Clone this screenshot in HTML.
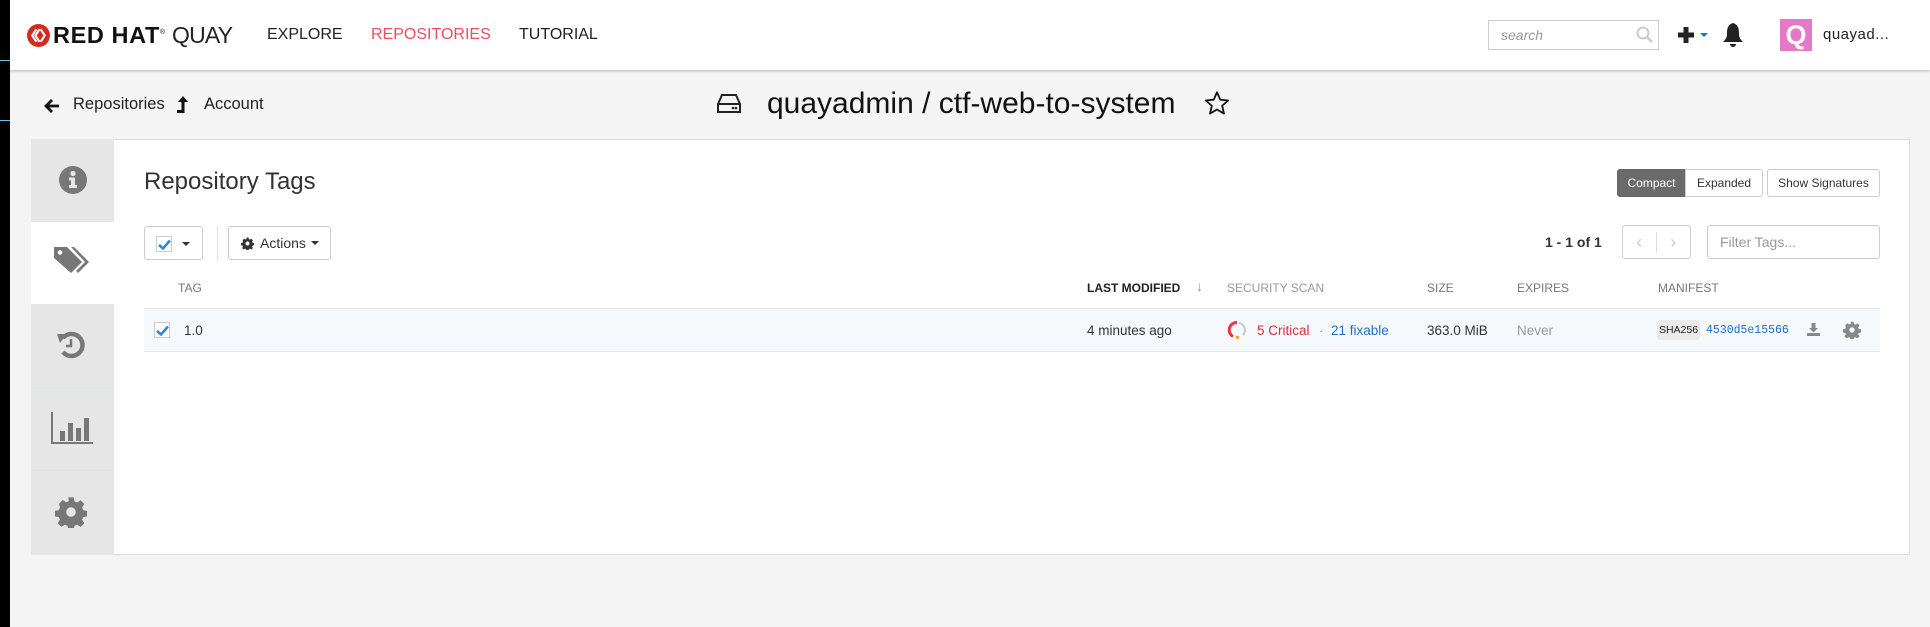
<!DOCTYPE html>
<html><head><meta charset="utf-8"><style>
*{box-sizing:border-box;margin:0;padding:0}
body{width:1930px;height:627px;background:#f4f4f4;font-family:"Liberation Sans",sans-serif;color:#333;position:relative;overflow:hidden}
.a{position:absolute}
.nav{left:0;top:0;width:1930px;height:70px;background:#fff;box-shadow:0 1px 3px rgba(0,0,0,.25)}
.navl{font-size:16px;top:26px;color:#222}
.btn{position:absolute;border:1px solid #ccc;border-radius:3px;background:#fff;font-size:12px;display:flex;align-items:center;justify-content:center;color:#333}
.th{top:281px;font-size:12px;color:#777}
.td{top:323px;font-size:13.5px;color:#333}
</style></head><body>
<div class="a nav">
  <svg class="a" style="left:27px;top:24px" width="23" height="23" viewBox="0 0 22 22"><circle cx="11" cy="11" r="11" fill="#d52b1e"/><path d="M9 5 L5 11 L9 17 M12 5 L8 11 L12 17" stroke="#fff" stroke-width="2" fill="none"/><path d="M13 5 L17 11 L13 17" stroke="#fff" stroke-width="2" fill="none"/></svg>
  <div class="a" style="left:53px;top:22px;font-size:23.5px;font-weight:bold;letter-spacing:0.6px;color:#111;white-space:nowrap">RED HAT<sup style="font-size:7px;font-weight:normal">®</sup></div>
  <div class="a" style="left:172px;top:22px;font-size:23px;color:#222;letter-spacing:-0.8px">QUAY</div>
  <div class="a navl" style="left:267px">EXPLORE</div>
  <div class="a navl" style="left:371px;color:#ef4d5f">REPOSITORIES</div>
  <div class="a navl" style="left:519px">TUTORIAL</div>
  <div class="a" style="left:1488px;top:20px;width:171px;height:30px;border:1px solid #ccc;font-size:14px;color:#999;font-style:italic;padding:6px 12px">search</div>
  <svg class="a" style="left:1636px;top:26px" width="17" height="17" viewBox="0 0 17 17"><circle cx="7" cy="7" r="5.5" stroke="#ccc" stroke-width="2" fill="none"/><path d="M11 11 L16 16" stroke="#ccc" stroke-width="2.5"/></svg>
  <svg class="a" style="left:1676px;top:25px" width="20" height="20" viewBox="0 0 20 20"><path d="M10 2V18M2 10H18" stroke="#222" stroke-width="5"/></svg>
  <div class="a" style="left:1700px;top:33px;border:4px solid transparent;border-top:4px solid #1a73c8;border-bottom:0"></div>
  <svg class="a" style="left:1721px;top:22px" width="24" height="26" viewBox="0 0 24 26"><path d="M12 1 C6 3 6 8 6 12 C6 16 4 18 2 20 H22 C20 18 18 16 18 12 C18 8 18 3 12 1Z" fill="#222"/><path d="M9 22 a3 3 0 0 0 6 0Z" fill="#222"/></svg>
  <div class="a" style="left:1780px;top:19px;width:32px;height:32px;background:#e47ac7;color:#fff;font-size:27px;font-weight:bold;text-align:center;line-height:32px">Q</div>
  <div class="a" style="left:1823px;top:26px;font-size:15px;color:#222;letter-spacing:0.5px">quayad...</div>
</div>
<div class="a" style="left:0;top:0;width:10px;height:627px;background:#000"></div>
<div class="a" style="left:0;top:60px;width:10px;height:1px;background:#6bc4e8"></div>
<div class="a" style="left:0;top:120px;width:10px;height:1px;background:#6bc4e8"></div>

<svg class="a" style="left:44px;top:98px" width="16" height="16" viewBox="0 0 16 16"><path d="M8 2 L2 8 L8 14 M2 8 H15" stroke="#111" stroke-width="2.8" fill="none"/></svg>
<div class="a" style="left:73px;top:95px;font-size:16.5px;color:#222">Repositories</div>
<svg class="a" style="left:176px;top:95px" width="14" height="19" viewBox="0 0 14 19"><path d="M7 1 L2 7 H5.5 V15 H1 V18 H8.5 V7 H12Z" fill="#111"/></svg>
<div class="a" style="left:204px;top:95px;font-size:16.5px;color:#222">Account</div>

<svg class="a" style="left:716px;top:92px" width="26" height="24" viewBox="0 0 26 24"><path d="M2 12 L6 3 H20 L24 12 V20 H2Z M2 12 H24" stroke="#222" stroke-width="2" fill="none"/><circle cx="17" cy="16" r="1.3" fill="#222"/><circle cx="20" cy="16" r="1.3" fill="#222"/></svg>
<div class="a" style="left:767px;top:87px;font-size:30px;color:#111">quayadmin / ctf-web-to-system</div>
<svg class="a" style="left:1203px;top:90px" width="28" height="27" viewBox="0 0 24 24"><path d="M12 2 L14.9 8.6 L22 9.3 L16.6 14 L18.2 21 L12 17.3 L5.8 21 L7.4 14 L2 9.3 L9.1 8.6Z" stroke="#111" stroke-width="1.6" fill="none" stroke-linejoin="round"/></svg>

<div class="a" style="left:31px;top:139px;width:1879px;height:416px;background:#fff;border:1px solid #ddd"></div>
<div class="a" style="left:31px;top:139px;width:83px;height:416px;background:#e6e6e6"></div>
<div class="a" style="left:31px;top:222px;width:83px;height:82px;background:#fff"></div>
<div class="a" style="left:31px;top:387px;width:83px;height:1px;background:#dfe3ea"></div>
<div class="a" style="left:31px;top:470px;width:83px;height:1px;background:#dfe3ea"></div>
<svg class="a" style="left:58px;top:165px" width="30" height="30" viewBox="0 0 30 30"><circle cx="15" cy="15" r="14" fill="#777"/><circle cx="15" cy="8.5" r="2.6" fill="#e6e6e6"/><path d="M11 12.5 H17 V20 H19 V23 H11 V20 H13 V15.5 H11Z" fill="#e6e6e6"/></svg>
<svg class="a" style="left:52px;top:245px" width="40" height="32" viewBox="0 0 40 32"><path d="M2 2 H15 L30 17 L19 28 L2 13Z" fill="#777"/><circle cx="8" cy="7.5" r="2.3" fill="#fff"/><path d="M19 2 H22 L37 17 L26 28 L24 26 L33 17Z" fill="#777"/></svg>
<svg class="a" style="left:56px;top:330px" width="32" height="30" viewBox="0 0 32 30"><path d="M7 8 A11 11 0 1 1 7 22" stroke="#777" stroke-width="4.5" fill="none"/><path d="M1 4 L11 4 L4 13Z" fill="#777"/><path d="M15 9 V16 H10" stroke="#777" stroke-width="2.5" fill="none"/></svg>
<svg class="a" style="left:50px;top:411px" width="44" height="34" viewBox="0 0 44 34"><path d="M2 1 V32 H43" stroke="#777" stroke-width="2" fill="none"/><rect x="10" y="20" width="5" height="10" fill="#777"/><rect x="18" y="12" width="5" height="18" fill="#777"/><rect x="26" y="17" width="5" height="13" fill="#777"/><rect x="34" y="7" width="5" height="23" fill="#777"/></svg>
<svg class="a" style="left:55px;top:496px" width="32" height="32" viewBox="0 0 24 24"><path fill="#777" d="M10 1h4l.6 3 2 .9 2.6-1.7 2.8 2.8-1.7 2.6.9 2 3 .6v4l-3 .6-.9 2 1.7 2.6-2.8 2.8-2.6-1.7-2 .9-.6 3h-4l-.6-3-2-.9-2.6 1.7-2.8-2.8 1.7-2.6-.9-2-3-.6v-4l3-.6.9-2L3 5.8 5.8 3l2.6 1.7 2-.9Z"/><circle cx="12" cy="12" r="3.6" fill="#e6e6e6"/></svg>

<div class="a" style="left:144px;top:168px;font-size:24px;color:#333">Repository Tags</div>
<div class="btn" style="left:1617px;top:169px;width:69px;height:28px;background:#6b6b6b;color:#fff;border-color:#666;border-radius:3px 0 0 3px">Compact</div>
<div class="btn" style="left:1685px;top:169px;width:78px;height:28px;border-radius:0 3px 3px 0">Expanded</div>
<div class="btn" style="left:1767px;top:169px;width:113px;height:28px">Show Signatures</div>

<div class="btn" style="left:144px;top:226px;width:59px;height:34px"></div>
<div class="a" style="left:156px;top:236px;width:16px;height:16px;border:1px solid #ccc;background:#fff"></div>
<svg class="a" style="left:158px;top:239px" width="13" height="11" viewBox="0 0 13 11"><path d="M1 6 L5 9.5 L12 1.5" stroke="#2f86d1" stroke-width="2.5" fill="none"/></svg>
<div class="a" style="left:182px;top:242px;border:4px solid transparent;border-top:4px solid #333;border-bottom:0"></div>
<div class="a" style="left:217px;top:226px;width:1px;height:34px;background:#e3e3e3"></div>
<div class="btn" style="left:228px;top:226px;width:103px;height:34px;font-size:14px;justify-content:flex-start;padding-left:12px">
<svg width="13" height="13" viewBox="0 0 24 24" style="margin-right:6px"><path fill="#333" d="M10 1h4l.6 3 2 .9 2.6-1.7 2.8 2.8-1.7 2.6.9 2 3 .6v4l-3 .6-.9 2 1.7 2.6-2.8 2.8-2.6-1.7-2 .9-.6 3h-4l-.6-3-2-.9-2.6 1.7-2.8-2.8 1.7-2.6-.9-2-3-.6v-4l3-.6.9-2L3 5.8 5.8 3l2.6 1.7 2-.9Z"/><circle cx="12" cy="12" r="3.6" fill="#fff"/></svg>Actions<span style="display:inline-block;margin-left:5px;border:4px solid transparent;border-top:4px solid #333;border-bottom:0"></span></div>

<div class="a" style="left:1545px;top:234px;font-size:14px;font-weight:bold;color:#333">1 - 1 of 1</div>
<div class="btn" style="left:1622px;top:225px;width:69px;height:34px;color:#ccc;font-size:18px"><span style="width:34px;text-align:center;border-right:1px solid #ddd">&#8249;</span><span style="width:34px;text-align:center">&#8250;</span></div>
<div class="btn" style="left:1707px;top:225px;width:173px;height:34px;justify-content:flex-start;padding-left:12px;font-size:14px;color:#999">Filter Tags...</div>

<div class="a th" style="left:178px">TAG</div>
<div class="a th" style="left:1087px;color:#222;font-weight:bold">LAST MODIFIED</div>
<div class="a th" style="left:1196px;top:278px;font-size:14px;color:#999">&#8595;</div>
<div class="a th" style="left:1227px;color:#999">SECURITY SCAN</div>
<div class="a th" style="left:1427px">SIZE</div>
<div class="a th" style="left:1517px">EXPIRES</div>
<div class="a th" style="left:1658px">MANIFEST</div>

<div class="a" style="left:144px;top:308px;width:1736px;height:44px;background:#f5f9fc;border-top:1px solid #e3e8ee;border-bottom:1px solid #e3e8ee"></div>
<div class="a" style="left:154px;top:322px;width:16px;height:16px;border:1px solid #ccc;background:#fff"></div>
<svg class="a" style="left:156px;top:325px" width="13" height="11" viewBox="0 0 13 11"><path d="M1 6 L5 9.5 L12 1.5" stroke="#2f86d1" stroke-width="2.5" fill="none"/></svg>
<div class="a td" style="left:184px">1.0</div>
<div class="a td" style="left:1087px">4 minutes ago</div>
<svg class="a" style="left:1227px;top:320px" width="20" height="20" viewBox="0 0 20 20"><path d="M10 2.5 A7.5 7.5 0 0 0 6 16.5" stroke="#e63946" stroke-width="3" fill="none"/><path d="M12 2.8 A7.5 7.5 0 0 1 16 15" stroke="#c8c8c8" stroke-width="2" fill="none"/><path d="M9 17.4 L12 17.2" stroke="#f0a030" stroke-width="3"/></svg>
<div class="a td" style="left:1257px;color:#d9303e">5 Critical</div>
<div class="a td" style="left:1319px;color:#999">·</div>
<div class="a td" style="left:1331px;color:#1a6fc8">21 fixable</div>
<div class="a td" style="left:1427px">363.0 MiB</div>
<div class="a td" style="left:1517px;color:#999">Never</div>
<div class="a" style="left:1657px;top:320px;width:43px;height:20px;background:#eaeaea;border-radius:3px;font-size:10.5px;color:#222;text-align:center;line-height:20px">SHA256</div>
<div class="a" style="left:1706px;top:324px;font-family:'Liberation Mono',monospace;font-size:11.5px;color:#1a6fc8">4530d5e15566</div>
<svg class="a" style="left:1806px;top:322px" width="15" height="15" viewBox="0 0 15 15"><path d="M5.5 1 H9.5 V6 H12 L7.5 10.5 L3 6 H5.5Z M1 11 V14 H14 V11" fill="#888"/></svg>
<svg class="a" style="left:1843px;top:321px" width="18" height="18" viewBox="0 0 24 24"><path fill="#888" d="M10 1h4l.6 3 2 .9 2.6-1.7 2.8 2.8-1.7 2.6.9 2 3 .6v4l-3 .6-.9 2 1.7 2.6-2.8 2.8-2.6-1.7-2 .9-.6 3h-4l-.6-3-2-.9-2.6 1.7-2.8-2.8 1.7-2.6-.9-2-3-.6v-4l3-.6.9-2L3 5.8 5.8 3l2.6 1.7 2-.9Z"/><circle cx="12" cy="12" r="3.6" fill="#f5f9fc"/></svg>
</body></html>
